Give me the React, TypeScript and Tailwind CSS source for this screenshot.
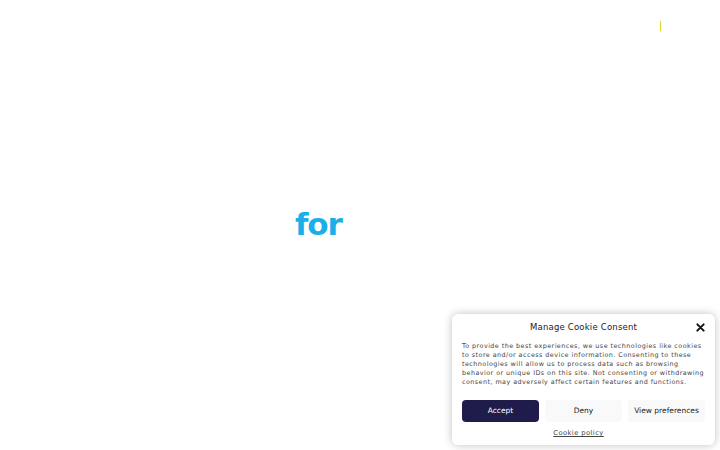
import React from "react";

export default function App() {
  return (
    <div className="relative w-[720px] h-[450px] bg-white overflow-hidden" style={{ fontFamily: '"DejaVu Sans", sans-serif' }}>
      <div className="absolute left-[660px] top-[21px] w-[1px] h-[10px] bg-[#d8d820]" />
      <div className="absolute left-[295px] top-[201px] text-[31px] font-bold leading-[46px] text-[#1aafe6] tracking-[-1.2px]">for</div>

      <div className="absolute left-[452px] top-[314px] w-[263px] h-[131px] bg-white rounded-[6px] shadow-[0_0_8px_rgba(0,0,0,0.25)] px-[10px] pt-[7px]">
        <div className="relative flex items-center justify-center h-[12px]">
          <span className="text-[8.5px] tracking-[0.2px] text-[#222]">Manage Cookie Consent</span>
          <svg className="absolute right-[0px] top-[2px]" width="9" height="9" viewBox="0 0 10 10">
            <path d="M1.5 1.5 L8.5 8.5 M8.5 1.5 L1.5 8.5" stroke="#111" strokeWidth="2.2" strokeLinecap="round" />
          </svg>
        </div>
        <p className="mt-[9px] text-[6.4px] leading-[9px] tracking-[0.45px] text-[#444] whitespace-nowrap">
          To provide the best experiences, we use technologies like cookies<br />
          to store and/or access device information. Consenting to these<br />
          technologies will allow us to process data such as browsing<br />
          behavior or unique IDs on this site. Not consenting or withdrawing<br />
          consent, may adversely affect certain features and functions.
        </p>
        <div className="mt-[13px] flex gap-[6px]">
          <div className="w-[77px] h-[22px] rounded-[4px] bg-[#1f1c4b] text-white text-[7.5px] flex items-center justify-center">Accept</div>
          <div className="w-[77px] h-[22px] rounded-[4px] bg-[#f9f9f9] text-[#222] text-[7.5px] flex items-center justify-center">Deny</div>
          <div className="w-[77px] h-[22px] rounded-[4px] bg-[#f9f9f9] text-[#222] text-[7.5px] flex items-center justify-center">View preferences</div>
        </div>
        <div className="mt-[6px] flex justify-center pr-[10px]">
          <span className="text-[6.8px] tracking-[0.4px] underline text-[#444]">Cookie policy</span>
        </div>
      </div>
    </div>
  );
}
